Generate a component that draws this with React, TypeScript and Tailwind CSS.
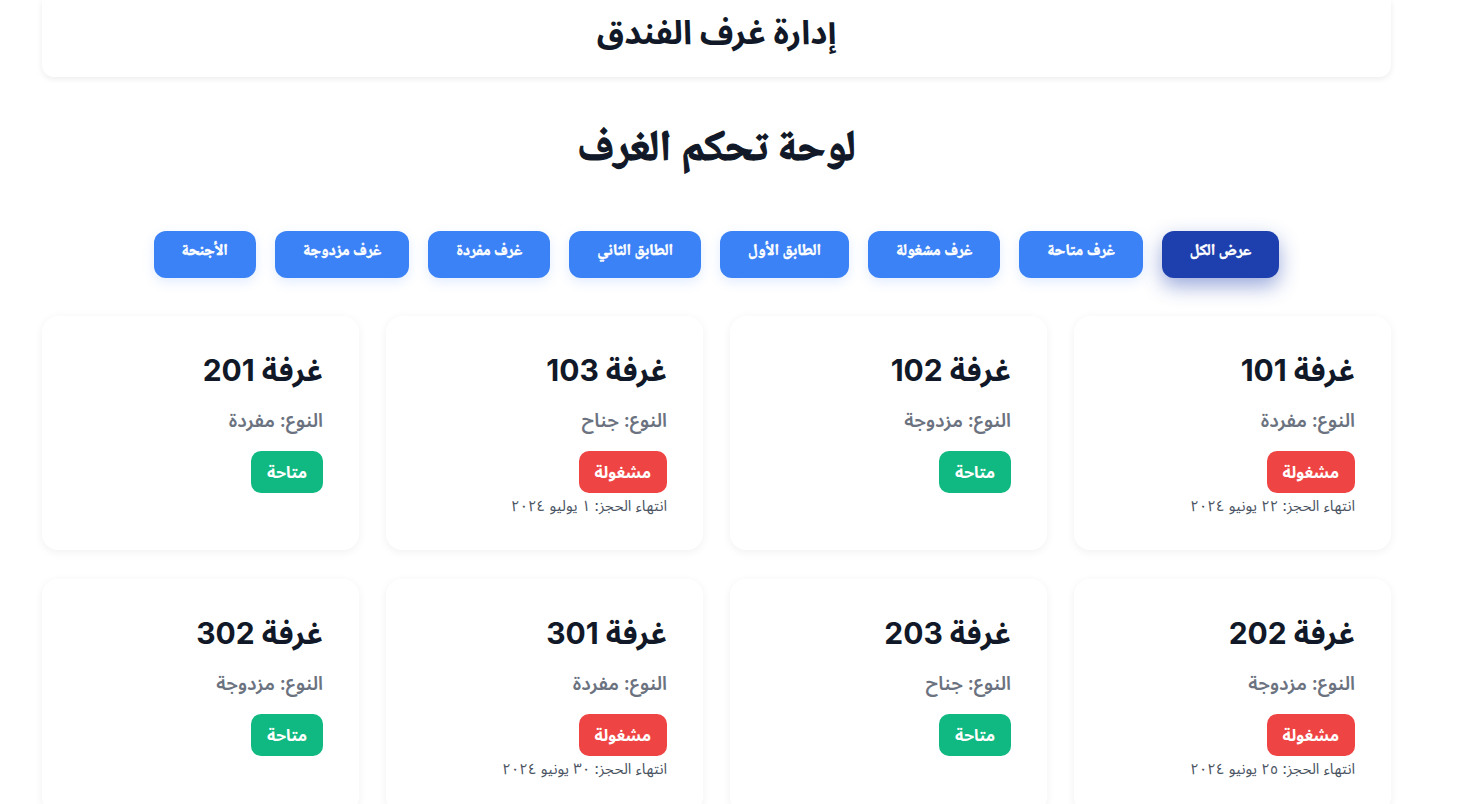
import React from "react";

const filters = [
  { label: "عرض الكل", active: true },
  { label: "غرف متاحة" },
  { label: "غرف مشغولة" },
  { label: "الطابق الأول" },
  { label: "الطابق الثاني" },
  { label: "غرف مفردة" },
  { label: "غرف مزدوجة" },
  { label: "الأجنحة" },
];

type Room = {
  number: number;
  type: string;
  busy: boolean;
  until?: string;
};

const rooms: Room[] = [
  { number: 101, type: "مفردة", busy: true, until: "٢٢ يونيو ٢٠٢٤" },
  { number: 102, type: "مزدوجة", busy: false },
  { number: 103, type: "جناح", busy: true, until: "١ يوليو ٢٠٢٤" },
  { number: 201, type: "مفردة", busy: false },
  { number: 202, type: "مزدوجة", busy: true, until: "٢٥ يونيو ٢٠٢٤" },
  { number: 203, type: "جناح", busy: false },
  { number: 301, type: "مفردة", busy: true, until: "٣٠ يونيو ٢٠٢٤" },
  { number: 302, type: "مزدوجة", busy: false },
];

const naskh = { fontFamily: '"Noto Naskh Arabic", serif' };

function RoomCard({ room }: { room: Room }) {
  return (
    <div className="bg-white rounded-2xl shadow-[0_2px_10px_rgba(0,0,0,0.06)] px-9 pt-9 pb-[34px] text-right">
      <h3 className="text-[30px] leading-9 font-bold text-[#111827] mb-[19px]">
        غرفة {room.number}
      </h3>
      <p className="text-[19px] leading-7 text-[#6b7280] font-semibold mb-4">النوع: {room.type}</p>
      {room.busy ? (
        <span className="inline-flex items-center h-[42px] px-4 rounded-[10px] bg-[#ef4444] text-white font-bold text-base">
          مشغولة
        </span>
      ) : (
        <span className="inline-flex items-center h-[42px] px-4 rounded-[10px] bg-[#10b981] text-white font-bold text-base">
          متاحة
        </span>
      )}
      {room.until && (
        <p className="text-[15px] leading-5 text-[#4b5563] mt-[3px]">انتهاء الحجز: {room.until}</p>
      )}
    </div>
  );
}

export default function App() {
  return (
    <div
      dir="rtl"
      className="min-h-screen bg-white"
      style={{ fontFamily: 'Inter, "Noto Sans Arabic", sans-serif' }}
    >
      <div className="w-[1349px] ml-[42px] mr-[68px]">
        <header className="bg-white rounded-b-xl shadow-[0_2px_6px_rgba(0,0,0,0.08)] h-[77px] flex items-center justify-center">
          <h1 className="text-[33px] font-bold text-[#111827] pb-3">إدارة غرف الفندق</h1>
        </header>

        <h2
          className="text-center text-[43px] font-bold text-[#111827] mt-[44px] mb-[50px] leading-[60px] [-webkit-text-stroke:1.2px_#111827]"
          style={naskh}
        >
          لوحة تحكم الغرف
        </h2>

        <div className="flex justify-center gap-[19px] mb-[38px]">
          {filters.map((f) => (
            <button
              key={f.label}
              className={
                f.active
                  ? "h-[47px] px-[28px] rounded-xl bg-[#1e40af] text-white text-base font-bold shadow-[0_8px_20px_rgba(30,64,175,0.45)] [-webkit-text-stroke:0.5px_white]"
                  : "h-[47px] px-[28px] rounded-xl bg-[#3b82f6] text-white text-base font-bold shadow-[0_4px_12px_rgba(59,130,246,0.15)] [-webkit-text-stroke:0.5px_white]"
              }
              style={naskh}
            >
              <span className="relative -top-[3px]">{f.label}</span>
            </button>
          ))}
        </div>

        <div className="grid grid-cols-4 gap-x-[27px] gap-y-[29px]">
          {rooms.map((r) => (
            <RoomCard key={r.number} room={r} />
          ))}
        </div>
      </div>
    </div>
  );
}
